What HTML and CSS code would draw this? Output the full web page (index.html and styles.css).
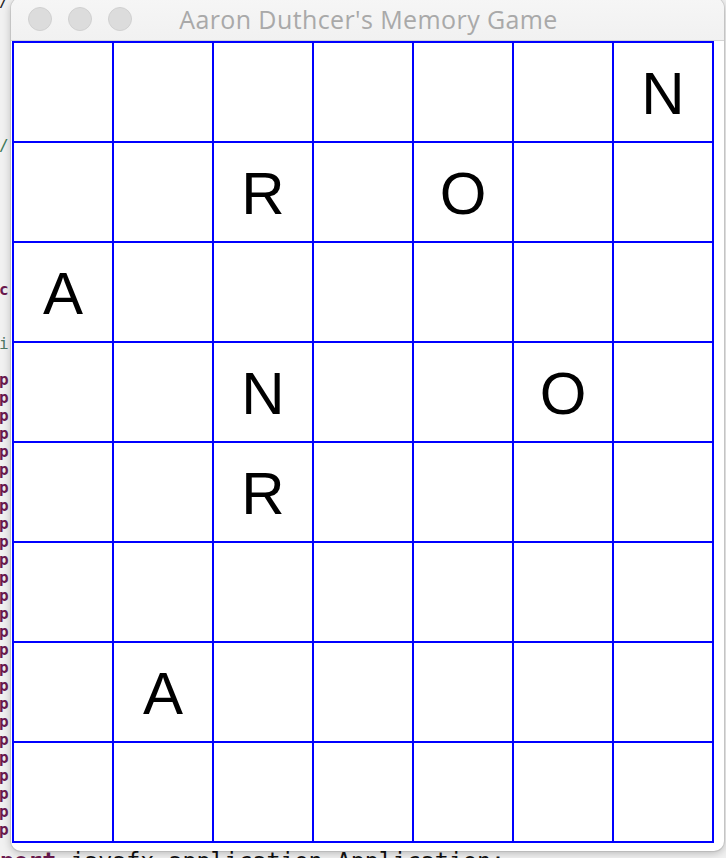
FILE: index.html
```html
<!DOCTYPE html>
<html lang="en">
<head>
    <meta charset="UTF-8">
    <meta name="viewport" content="width=device-width, initial-scale=1.0">
    <title>Aaron Duthcer's Memory Game</title>
    <link rel="stylesheet" href="styles.css">
</head>
<body>
    <div class="desktop">
        <div class="editor">
<pre class="gutter"><span class="dark">/</span>







<span class="comment">/</span>







<span class="kw">c</span>


<span class="ident">i</span>

<span class="kw">p</span>
<span class="kw">p</span>
<span class="kw">p</span>
<span class="kw">p</span>
<span class="kw">p</span>
<span class="kw">p</span>
<span class="kw">p</span>
<span class="kw">p</span>
<span class="kw">p</span>
<span class="kw">p</span>
<span class="kw">p</span>
<span class="kw">p</span>
<span class="kw">p</span>
<span class="kw">p</span>
<span class="kw">p</span>
<span class="kw">p</span>
<span class="kw">p</span>
<span class="kw">p</span>
<span class="kw">p</span>
<span class="kw">p</span>
<span class="kw">p</span>
<span class="kw">p</span>
<span class="kw">p</span>
<span class="kw">p</span>
<span class="kw">p</span>
<span class="kw">p</span></pre>
            <pre class="code-line"><span class="kw">import</span> javafx.application.Application;</pre>
        </div>

        <div class="window">
            <div class="titlebar">
                <div class="lights">
                    <span class="light"></span>
                    <span class="light"></span>
                    <span class="light"></span>
                </div>
                <div class="title">Aaron Duthcer's Memory Game</div>
            </div>

            <div class="board">
                <div class="cell"></div><div class="cell"></div><div class="cell"></div><div class="cell"></div><div class="cell"></div><div class="cell"></div><div class="cell">N</div>
                <div class="cell"></div><div class="cell"></div><div class="cell">R</div><div class="cell"></div><div class="cell">O</div><div class="cell"></div><div class="cell"></div>
                <div class="cell">A</div><div class="cell"></div><div class="cell"></div><div class="cell"></div><div class="cell"></div><div class="cell"></div><div class="cell"></div>
                <div class="cell"></div><div class="cell"></div><div class="cell">N</div><div class="cell"></div><div class="cell"></div><div class="cell">O</div><div class="cell"></div>
                <div class="cell"></div><div class="cell"></div><div class="cell">R</div><div class="cell"></div><div class="cell"></div><div class="cell"></div><div class="cell"></div>
                <div class="cell"></div><div class="cell"></div><div class="cell"></div><div class="cell"></div><div class="cell"></div><div class="cell"></div><div class="cell"></div>
                <div class="cell"></div><div class="cell">A</div><div class="cell"></div><div class="cell"></div><div class="cell"></div><div class="cell"></div><div class="cell"></div>
                <div class="cell"></div><div class="cell"></div><div class="cell"></div><div class="cell"></div><div class="cell"></div><div class="cell"></div><div class="cell"></div>
            </div>
        </div>
    </div>
</body>
</html>
```
FILE: styles.css
```css
body {
    margin: 0;
    font-family: "Liberation Sans", Arial, sans-serif;
}

.desktop {
    position: relative;
    width: 726px;
    height: 858px;
    overflow: hidden;
    background: #f1f1f1;
}

/* editor behind the window */
.editor {
    font-family: "Liberation Mono", monospace;
}

.gutter {
    margin: -7px 0 0 -1px;
    height: 854px;
    font-size: 16px;
    line-height: 18px;
    font-weight: bold;
    overflow: hidden;
}

.code-line {
    margin: 0 0 0 -28px;
    font-size: 23.3px;
    line-height: 28px;
    color: #111;
    white-space: pre;
}

.kw {
    color: #6b1a4f;
    font-weight: bold;
}

.comment {
    color: #3f7a57;
    font-weight: normal;
}

.ident {
    color: #4f7a66;
    font-weight: normal;
}

.dark {
    color: #222;
    font-weight: normal;
}

/* the game window */
.window {
    position: absolute;
    left: 11px;
    top: -2px;
    width: 713px;
    height: 853px;
    background: #fff;
    border-radius: 10px;
    box-shadow: 0 2px 8px rgba(0, 0, 0, 0.25), 0 0 0 1px rgba(0, 0, 0, 0.08);
    overflow: hidden;
}

.titlebar {
    position: relative;
    height: 42px;
    display: flex;
    align-items: center;
    justify-content: center;
    background: linear-gradient(#f6f6f6, #f1f1f1);
    border-bottom: 1px solid #d4d4d4;
}

.lights {
    position: absolute;
    left: 17px;
    top: 9px;
    display: flex;
    gap: 16px;
}

.light {
    width: 22px;
    height: 22px;
    border-radius: 50%;
    background: #dcdcdc;
    border: 1px solid #d0d0d0;
}

.title {
    font-family: "Open Sans", sans-serif;
    font-size: 25px;
    letter-spacing: 0.4px;
    color: #a9a9a9;
    margin-left: 2px;
}

.board {
    display: grid;
    grid-template-columns: repeat(7, 100px);
    grid-template-rows: repeat(8, 100px);
    width: 700px;
    margin-left: 1px;
    border-left: 2px solid #0000ff;
    border-top: 2px solid #0000ff;
}

.cell {
    box-sizing: border-box;
    border-right: 2px solid #0000ff;
    border-bottom: 2px solid #0000ff;
    padding-top: 4px;
    display: flex;
    align-items: center;
    justify-content: center;
    font-size: 60px;
    line-height: 1;
    color: #000;
}
```
